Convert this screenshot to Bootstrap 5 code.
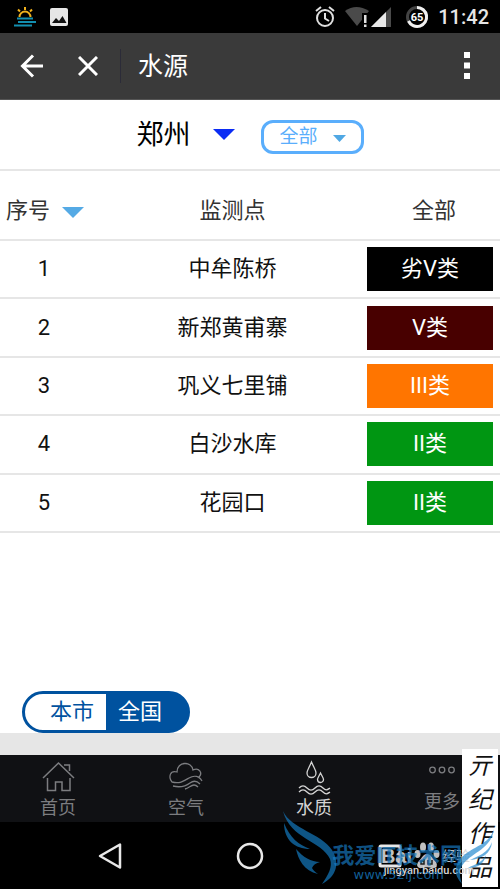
<!DOCTYPE html>
<html lang="zh-CN">
<head>
<meta charset="utf-8">
<meta name="viewport" content="width=device-width, initial-scale=1">
<title>水源</title>
<link href="https://cdn.jsdelivr.net/npm/bootstrap@5.3.0/dist/css/bootstrap.min.css" rel="stylesheet">
<style>
  body { font-family: Roboto, "Noto Sans CJK SC", sans-serif; font-size: 22px; line-height: 32px; color: #111; background: #fff; }
  a { text-decoration: none; }
  svg { display: block; flex: none; }
  button { line-height: inherit; }
  .status-bar { background: #000; height: 33px; padding: 0 11px 0 14px; color: #e6e6e6; font-size: 20px; font-weight: 500; gap: 9px; }
  .title-bar { background: #3a3a3a; height: 67px; padding: 0 24px 0 20px; border-bottom: 1px solid #555; color: #fff; }
  .title-bar h1 { font-size: 25px; font-weight: 400; line-height: 32px; border-left: 1px solid #2b2b38; padding: 2px 0 0 17px; margin-left: 22px; }
  .close-btn { margin-left: 34px; }
  .plain-btn { background: none; border: 0; padding: 0; color: inherit; }
  .filter-row { height: 71px; border-bottom: 2px solid #e6e6e6; gap: 26px; }
  .plain-select { appearance: none; background: transparent; border: 0; padding: 0; color: inherit; font-family: inherit; }
  .city-pick { font-size: 27px; color: #000; gap: 22px; }
  .level-pick { font-size: 19px; line-height: 28px; color: #5aaefc; border: 3px solid #5aaefc; border-radius: 12px; padding: 0 15px 0 16px; gap: 14px; height: 34px; }
  .water-table { height: 362px; table-layout: fixed; width: 100%; text-align: center; }
  .water-table thead tr { height: 69px; }
  .water-table th { font-weight: 400; color: #333; padding: 11px 0 0; }
  .water-table th:first-child { padding-left: 6px; }
  .water-table tr { border-bottom: 2px solid #e6e6e6; }
  .water-table td { padding: 0 7px; }
  .water-table td:first-child { padding: 0 17px 0 0; }
  .sort-btn { gap: 12px; }
  .grade { height: 44px; line-height: 44px; color: #fff; }
  .g-worst { background: #000; }
  .g-five { background: #480000; }
  .g-three { background: #ff7500; }
  .g-two { background: #009612; }
  .scope { border: 3px solid #00529f; border-radius: 21px; height: 42px; margin-left: 22px; background: linear-gradient(90deg, #fff 50%, #00529f 50%); }
  .scope label { line-height: 36px; cursor: pointer; color: #00529f; padding: 0 12px 0 25px; }
  .scope label + input + label { color: #fff; padding: 0 25px 0 12px; }
  .grey-strip { height: 22px; background: #e6e6e6; }
  .tab-bar { background: #101114; height: 67px; padding: 4px 40px 0; font-size: 18px; line-height: 26px; }
  .tab-bar a { color: #7c7d80; }
  .tab-bar a.current { color: #d4d4d4; }
  .tab-bar svg { height: 36px; }
  .tab-bar .more-tab svg { height: 30px; }
  .system-bar { background: #000; height: 67px; padding: 0 41px; color: #e8e8e8; }
  .over { position: absolute; pointer-events: none; white-space: nowrap; }
  .wing { right: 0; bottom: 0; }
  .site-name { right: 38px; bottom: 17px; font-size: 22px; font-weight: 700; color: #1674b9; opacity: .7; }
  .site-url { right: 56px; bottom: 5px; font-size: 13px; line-height: 18px; color: #1674b9; opacity: .8; font-family: "DejaVu Sans", sans-serif; }
  .baike { right: 30px; bottom: 19px; height: 28px; font-size: 14px; line-height: 28px; color: #d6d6d6; opacity: .9; }
  .baike b { font-size: 20px; font-family: "Liberation Sans", sans-serif; }
  .baike-url { right: 26px; bottom: 9px; font-size: 11px; line-height: 18px; font-weight: 500; color: #d6d6d6; }
  .paper { right: 2px; bottom: 2px; width: 36px; height: 138px; background: #fff; color: #111; font-size: 24px; line-height: 34px; font-style: italic; text-align: center; white-space: normal; }
</style>
</head>
<body class="d-flex flex-column min-vh-100">
<div class="status-bar d-flex align-items-center">
  <svg width="22" height="22" viewBox="0 0 22 22" fill="none" stroke-width="2"><path stroke="#f0b01c" d="M5.500 11a5.500 5.500 0 0 1 11 0M11 1v3M4 3.500l2 2M18 3.500l-2 2"/><path d="M3 12.500h16M4 16h18M0 19.500h18" stroke="#138fb0"/></svg>
  <svg class="ms-1" width="20" height="20" viewBox="0 0 20 20"><rect x="1" y="1" width="18" height="18" rx="2" fill="#e6e6e6"/><path d="M3 16l4-5 3 3 3.500-5 4 7z" fill="#111"/></svg>
  <svg class="ms-auto" width="20" height="22" viewBox="0 0 20 22" fill="none" stroke="#e0e0e0" stroke-width="2"><circle cx="10" cy="12" r="8"/><path d="M10 7v5.500l4 2.500M1 5l5-4M19 5l-5-4"/></svg>
  <svg width="48" height="22" viewBox="0 0 48 22"><path d="M1 5Q12-3 25 5L13 20z" fill="#4a4a4a"/><path d="M18 7h6v15h-6z" fill="#000"/><path d="M20 9h2.500v8H20zM20 18.500h2.500V21H20z" fill="#e0e0e0"/><path d="M47 1v20H27z" fill="#4a4a4a"/><path d="M42 6v15H27z" fill="#e8e8e8"/></svg>
  <svg class="ms-1" width="24" height="24" viewBox="0 0 24 24"><circle cx="12" cy="12" r="9.500" fill="none" stroke="#444" stroke-width="3"/><path d="M12 2.500a9.500 9.500 0 1 1-8.500 13.500" fill="none" stroke="#f0f0f0" stroke-width="3"/><text x="12" y="16" font-size="11" font-weight="700" text-anchor="middle" fill="#fff">65</text></svg>
  <span>11:42</span>
</div>

<header class="title-bar d-flex align-items-center">
  <button class="plain-btn" aria-label="返回"><svg width="24" height="24" viewBox="0 0 24 24" fill="none" stroke="#fff" stroke-width="3"><path d="M23 12H3M13 1.500L2.500 12 13 22.500"/></svg></button>
  <button class="plain-btn close-btn" aria-label="关闭"><svg width="20" height="20" viewBox="0 0 20 20" stroke="#fff" stroke-width="3"><path d="M1 1l18 18M19 1L1 19"/></svg></button>
  <h1 class="mb-0">水源</h1>
  <button class="plain-btn ms-auto" aria-label="菜单"><svg width="18" height="28" viewBox="0 0 18 28" fill="#fff"><path d="M6 0h6v6H6zM6 10.500h6v6H6zM6 21h6v6H6z"/></svg></button>
</header>

<main class="flex-grow-1 d-flex flex-column">
  <div class="filter-row d-flex justify-content-center">
    <div class="city-pick d-flex align-items-center">
      <select class="plain-select" aria-label="城市"><option>郑州</option></select>
      <svg width="22" height="11" viewBox="0 0 22 11"><path d="M0 0h22L11 11z" fill="#0b2cf4"/></svg>
    </div>
    <div class="level-pick d-flex align-items-center align-self-center mt-1">
      <select class="plain-select" aria-label="水质类别"><option>全部</option></select>
      <svg class="mt-1" width="13" height="7" viewBox="0 0 13 7"><path d="M0 0h13L6.500 7z" fill="#50a8e4"/></svg>
    </div>
  </div>

  <table class="water-table">
    <colgroup><col style="width:21%"><col style="width:51%"><col style="width:28%"></colgroup>
    <thead>
      <tr>
        <th scope="col"><button class="plain-btn sort-btn d-flex align-items-center text-nowrap">序号<svg class="mt-1" width="22" height="11" viewBox="0 0 22 11"><path d="M0 0h22L11 11z" fill="#55aae5"/></svg></button></th>
        <th scope="col">监测点</th>
        <th scope="col"><span class="ps-1 ms-1">全部</span></th>
      </tr>
    </thead>
    <tbody>
      <tr><td>1</td><td>中牟陈桥</td><td><div class="grade g-worst">劣V类</div></td></tr>
      <tr><td>2</td><td>新郑黄甫寨</td><td><div class="grade g-five">V类</div></td></tr>
      <tr><td>3</td><td>巩义七里铺</td><td><div class="grade g-three">III类</div></td></tr>
      <tr><td>4</td><td>白沙水库</td><td><div class="grade g-two">II类</div></td></tr>
      <tr><td>5</td><td>花园口</td><td><div class="grade g-two">II类</div></td></tr>
    </tbody>
  </table>

  <div class="scope d-flex align-self-start mt-auto" role="group" aria-label="范围">
    <input class="visually-hidden" type="radio" name="scope" id="scope-city" checked><label for="scope-city">本市</label>
    <input class="visually-hidden" type="radio" name="scope" id="scope-all"><label for="scope-all">全国</label>
  </div>
</main>
<div class="grey-strip"></div>

<footer class="position-relative">
  <nav class="tab-bar d-flex justify-content-between">
    <a href="#" class="d-flex flex-column align-items-center"><svg width="34" viewBox="0 0 34 36" fill="none" stroke="currentColor" stroke-width="1.500"><path d="M2 19L17.500 4 33 19M6.500 19v12.500h8V23h6.500v8.500h8V19M23 6h5.500v6"/></svg>首页</a>
    <a href="#" class="d-flex flex-column align-items-center"><svg width="36" viewBox="0 0 36 36" fill="none" stroke="currentColor" stroke-width="1.300"><path d="M4 23C0 18 2 11 9 13 9 2 24 2 25 11c6-3 10 3 6 7M4 23c8 2 12-1 17-4s10-2 13 3M5 27c8 2 13 0 17-3s7-2 10 1M17 30c4-1 6-4 9-4 2 0 3 1 4 2"/></svg>空气</a>
    <a href="#" class="current d-flex flex-column align-items-center" aria-current="page"><svg width="34" viewBox="0 0 34 36" fill="none" stroke="currentColor" stroke-width="1.300"><path d="M14.500 3C12 9 10 11 10 14a4.500 4.500 0 0 0 9 0c0-3-2-5-4.500-11zM23.500 14c-2 4-3 5-3 6.500a3 3 0 0 0 6 0c0-1.500-1-2.500-3-6.500zM2 29c3-3 5-3 8 0s5 3 8 0 5-3 8 0 4 2 7 0M2 33c3-3 5-3 8 0s5 3 8 0 5-3 8 0 4 2 7 0"/></svg>水质</a>
    <a href="#" class="more-tab d-flex flex-column align-items-center"><svg width="26" viewBox="0 0 26 30" fill="none" stroke="currentColor" stroke-width="1.300"><circle cx="3.500" cy="11" r="2.800"/><circle cx="13" cy="11" r="2.800"/><circle cx="22.500" cy="11" r="2.800"/></svg>更多</a>
  </nav>
  <div class="system-bar d-flex align-items-center">
    <button class="plain-btn flex-fill d-flex justify-content-center" aria-label="后退"><svg width="24" height="26" viewBox="0 0 24 26" fill="none" stroke="currentColor" stroke-width="2.500" stroke-linejoin="round"><path d="M22 1.500v23L2 13z"/></svg></button>
    <button class="plain-btn flex-fill d-flex justify-content-center" aria-label="主屏幕"><svg width="28" height="28" viewBox="0 0 28 28" fill="none" stroke="currentColor" stroke-width="2.500"><circle cx="14" cy="14" r="12"/></svg></button>
    <button class="plain-btn flex-fill d-flex justify-content-center" aria-label="最近任务"><svg width="24" height="24" viewBox="0 0 24 24" fill="none" stroke="currentColor" stroke-width="3"><rect x="2" y="2" width="20" height="20" rx="1"/></svg></button>
  </div>
  <div class="over paper">亓<br>纪<br>作<br>品</div>
  <div class="over baike d-flex align-items-center"><b>Bai</b><svg width="30" height="28" viewBox="-2 0 30 28" fill="#d6d6d6"><ellipse cx="3.500" cy="12" rx="3" ry="4"/><ellipse cx="9" cy="5" rx="3" ry="4.500"/><ellipse cx="17" cy="5" rx="3" ry="4.500"/><ellipse cx="22.500" cy="12" rx="3" ry="4"/><path d="M13 12c4 0 5 4 8 7 4 4 1 8-3 7-3-1-7-1-10 0-4 1-7-3-3-7 3-3 4-7 8-7z"/><path d="M10 17v5H7v-3h3M14 18v4h4v-4" fill="none" stroke="#222" stroke-width="1.500"/></svg><span>经验</span></div>
  <div class="over baike-url">jingyan.baidu.com</div>
  <div class="over site-name">我爱IT技术网</div>
  <div class="over site-url">www.52ij.com</div>
  <svg class="over wing" width="220" height="80" viewBox="280 809 220 80" fill="#1683cc" fill-opacity=".65"><path d="M283 811c8 18 38 22 49 39 8 13 5 26-10 34 6-9 11-17 8-25-8-18-40-20-47-48z"/><path d="M284 823c6 15 15 22 26 26-15 0-26-9-26-26z"/><path d="M296 849c7 8 15 13 24 13-4 1-7 3-8 6 1 2 3 4 6 6-14-3-20-15-22-25z"/><path d="M494 829c-4 15-22 18-32 28-8 9-9 17 0 27-3-9-3-15 2-21 8-10 28-15 30-34z"/><path d="M492 842c-4 11-14 14-22 18 11-1 21-6 22-18zM486 855c-4 8-11 9-18 13 10 0 16-4 18-13z"/></svg>
</footer>
<script src="https://cdn.jsdelivr.net/npm/bootstrap@5.3.0/dist/js/bootstrap.bundle.min.js"></script>
</body>
</html>
